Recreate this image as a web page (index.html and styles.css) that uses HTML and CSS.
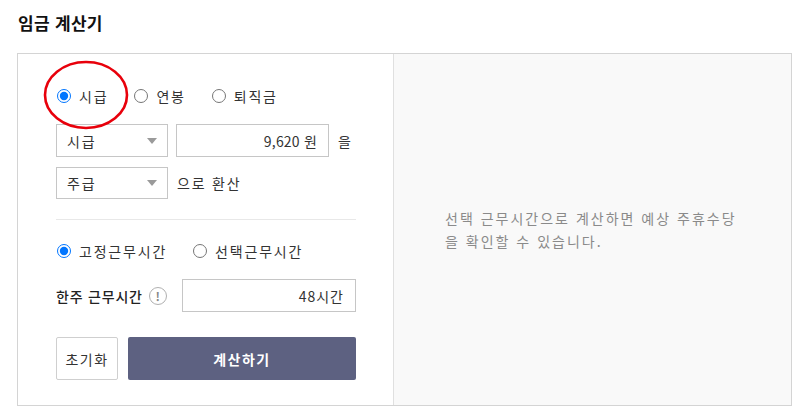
FILE: index.html
```html
<!DOCTYPE html>
<html lang="ko">
<head>
<meta charset="utf-8">
<title>임금 계산기</title>
<link rel="stylesheet" href="styles.css">
</head>
<body>
<div class="page">
  <h1 class="title">임금 계산기</h1>
  <div class="calc">
    <div class="left">
      <div class="radio-row first">
        <label class="radio"><input type="radio" name="type" checked><span>시급</span></label>
        <label class="radio"><input type="radio" name="type"><span>연봉</span></label>
        <label class="radio"><input type="radio" name="type"><span>퇴직금</span></label>
        <svg class="circle-mark" width="88" height="72" viewBox="0 0 88 72"><ellipse cx="43" cy="35" rx="41" ry="33" fill="none" stroke="#e8000b" stroke-width="2.6"/></svg>
      </div>
      <div class="field-row">
        <div class="select"><span>시급</span><i class="arrow"></i></div>
        <div class="input wage">9,620 원</div>
        <span class="suffix">을</span>
      </div>
      <div class="field-row second">
        <div class="select"><span>주급</span><i class="arrow"></i></div>
        <span class="suffix convert">으로 환산</span>
      </div>
      <div class="divider"></div>
      <div class="radio-row work">
        <label class="radio"><input type="radio" name="work" checked><span>고정근무시간</span></label>
        <label class="radio"><input type="radio" name="work"><span>선택근무시간</span></label>
      </div>
      <div class="hours-row">
        <span class="hours-label">한주 근무시간</span>
        <span class="info">!</span>
        <div class="input hours">48시간</div>
      </div>
      <div class="btn-row">
        <button class="btn reset">초기화</button>
        <button class="btn calc-btn">계산하기</button>
      </div>
    </div>
    <div class="right">
      <p class="notice">선택 근무시간으로 계산하면 예상 주휴수당을 확인할 수 있습니다.</p>
    </div>
  </div>
</div>
</body>
</html>
```
FILE: styles.css
```css
* { box-sizing: border-box; }
body {
  margin: 0;
  background: #fff;
  font-family: "Noto Sans CJK KR", "Noto Sans", sans-serif;
  color: #222;
}
.page {
  padding: 0 0 0 17px;
}
.title {
  margin: 0;
  padding: 10px 0 0 1px;
  height: 53px;
  font-size: 17px;
  line-height: 26px;
  font-weight: 700;
  color: #111;
  letter-spacing: 0.3px;
}
.calc {
  display: flex;
  width: 775px;
  height: 353px;
  border: 1px solid #d4d4d4;
}
.left {
  width: 375px;
  padding: 26px 0 0 38px;
  flex: none;
}
.right {
  flex: 1;
  background: #f9f9f9;
  border-left: 1px solid #e0e0e0;
  display: flex;
  align-items: center;
  padding: 0 0 0 51px;
}
.notice {
  margin: 0;
  width: 298px;
  font-size: 14px;
  line-height: 23px;
  color: #8a8a8a;
  letter-spacing: 2px;
  word-break: break-all;
}
.radio-row {
  display: flex;
  align-items: center;
  height: 32px;
  font-size: 14px;
  position: relative;
  letter-spacing: 1.8px;
}
.radio {
  display: flex;
  align-items: center;
  margin-right: 25px;
  color: #333;
}
.radio input {
  margin: 0 8px 0 1px;
  width: 14px;
  height: 14px;
  accent-color: #0075ff;
}
.circle-mark {
  position: absolute;
  left: -13px;
  top: -20px;
}
.field-row {
  display: flex;
  align-items: center;
  margin-top: 12px;
  height: 33px;
}
.field-row.second { margin-top: 10px; height: 32px; }
.select {
  width: 112px;
  height: 100%;
  border: 1px solid #c6c6c6;
  display: flex;
  align-items: center;
  justify-content: space-between;
  padding: 0 10px 0 10px;
  font-size: 14px;
  color: #333;
  letter-spacing: 1.8px;
}
.arrow {
  width: 0;
  height: 0;
  border-left: 5px solid transparent;
  border-right: 5px solid transparent;
  border-top: 6px solid #9a9a9a;
}
.input {
  height: 100%;
  border: 1px solid #c6c6c6;
  display: flex;
  align-items: center;
  justify-content: flex-end;
  padding: 0 11px;
  font-size: 14px;
  color: #333;
}
.wage {
  width: 153px;
  margin-left: 8px;
  letter-spacing: 0.2px;
}
.suffix {
  font-size: 14px;
  color: #333;
  margin-left: 9px;
  letter-spacing: 1.8px;
}
.divider {
  width: 300px;
  height: 1px;
  background: #e8e8e8;
  margin-top: 20px;
}
.radio-row.work {
  margin-top: 15px;
}
.hours-row {
  display: flex;
  align-items: center;
  width: 300px;
  margin-top: 12px;
  height: 33px;
  font-size: 14px;
}
.hours-label {
  color: #222;
  font-weight: 500;
  letter-spacing: 0.8px;
}
.info {
  width: 18px;
  height: 18px;
  border: 1.5px solid #b0b0b0;
  border-radius: 50%;
  display: flex;
  align-items: center;
  justify-content: center;
  font-size: 12px;
  font-weight: 700;
  color: #888;
  margin-left: 6px;
  line-height: 1;
}
.hours {
  width: 174px;
  margin-left: auto;
  padding-right: 11px;
  letter-spacing: 1px;
}
.btn-row {
  display: flex;
  margin-top: 25px;
  height: 43px;
  gap: 10px;
}
.btn {
  font-family: inherit;
  font-size: 14px;
  border-radius: 2px;
  cursor: pointer;
  letter-spacing: 1.5px;
}
.reset {
  width: 62px;
  background: #fff;
  border: 1px solid #cfcfcf;
  color: #333;
  padding: 0;
}
.calc-btn {
  width: 228px;
  border: none;
  background: #5d6181;
  color: #fff;
  font-weight: 700;
}
```
